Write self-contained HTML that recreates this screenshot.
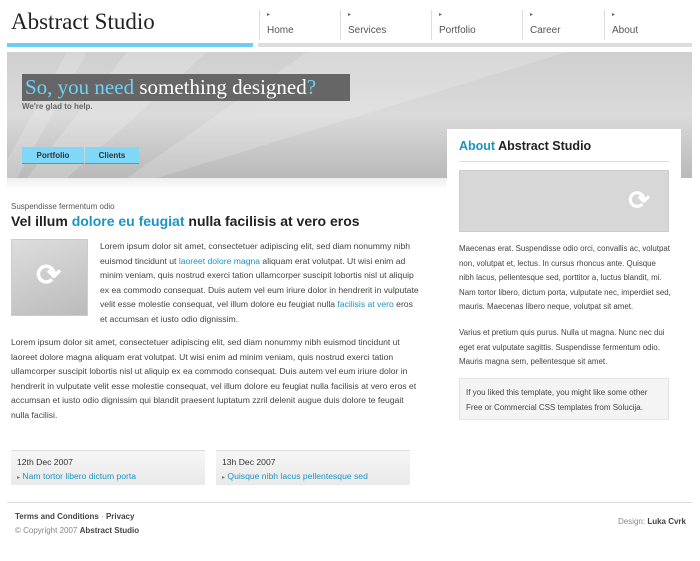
<!DOCTYPE html>
<html><head><meta charset="utf-8"><style>
*{margin:0;padding:0;box-sizing:border-box}
body{width:700px;height:561px;background:#fff;font-family:"Liberation Sans",sans-serif;color:#444;position:relative;overflow:hidden;font-size:11px}
.a{position:absolute}
a,.l{color:#1c94c4;text-decoration:none}
.logo{left:11px;top:9px;font-family:"Liberation Serif",serif;font-size:23px;color:#222}
.nav{top:10px;height:30px;border-left:1px solid #ddd;padding-left:7px;font-size:10px;color:#555}
.nav i{display:block;font-style:normal;font-size:6px;color:#666;line-height:8px;margin-top:1px}
.nav span{display:block;margin-top:6px}
.banner{left:7px;top:52px;width:685px;height:126px;background:linear-gradient(180deg,#cfcfcf,#dadada 50%,#b9b9b9);overflow:hidden}
.h1{left:22px;top:74px;width:328px;height:27px;background:#666;font-family:"Liberation Serif",serif;font-size:21px;color:#fff;padding-left:3px;line-height:27px}
.btn{top:147px;height:17px;background:#7fd8f8;border-bottom:1px solid #888;font-size:8px;font-weight:bold;color:#333;text-align:center;line-height:17px}
.side{left:447px;top:129px;width:234px;height:310px;background:#fff}
p{line-height:14.5px}
.sp{position:absolute;left:12px;width:212px;font-size:7.9px;line-height:14.5px;color:#444}
</style></head><body>
<div class="a logo">Abstract Studio</div>
<div class="a nav" style="left:259px;width:81px"><i>▸</i><span>Home</span></div>
<div class="a nav" style="left:340px;width:91px"><i>▸</i><span>Services</span></div>
<div class="a nav" style="left:431px;width:91px"><i>▸</i><span>Portfolio</span></div>
<div class="a nav" style="left:522px;width:82px"><i>▸</i><span>Career</span></div>
<div class="a nav" style="left:604px;width:88px"><i>▸</i><span>About</span></div>
<div class="a" style="left:7px;top:43px;width:246px;height:4px;background:#6dcdf2"></div>
<div class="a" style="left:258px;top:43px;width:434px;height:4px;background:#ddd"></div>
<div class="a banner">
<svg width="685" height="126" style="position:absolute;left:0;top:0"><g fill="#fff" opacity=".18"><polygon points="60,0 80,0 10,126 -10,126"/><polygon points="120,0 200,0 60,126 20,126"/><polygon points="300,0 560,0 150,126 120,126"/></g></svg>
</div>
<div class="a" style="left:7px;top:178px;width:440px;height:12px;background:linear-gradient(#eee,#fff)"></div>
<div class="a h1"><span style="color:#6fd0f5">So, you need</span> something designed<span style="color:#6fd0f5">?</span></div>
<div class="a" style="left:22px;top:102px;font-size:8px;font-weight:bold;color:#666">We're glad to help.</div>
<div class="a btn" style="left:22px;width:62px">Portfolio</div>
<div class="a btn" style="left:85px;width:54px">Clients</div>
<div class="a side">
<div class="a" style="left:12px;top:10px;font-size:12.5px;font-weight:bold;color:#222"><span class="l">About</span> Abstract Studio</div>
<div class="a" style="left:12px;top:32px;width:210px;height:1px;background:#ddd"></div>
<div class="a" style="left:12px;top:41px;width:210px;height:62px;background:#d7d7d7;border:1px solid #ccc"><div style="position:absolute;right:18px;top:14px;font-size:26px;color:#fff;font-weight:bold">⟳</div></div>
<div class="sp" style="top:113px">Maecenas erat. Suspendisse odio orci, convallis ac, volutpat non, volutpat et, lectus. In cursus rhoncus ante. Quisque nibh lacus, pellentesque sed, porttitor a, luctus blandit, mi. Nam tortor libero, dictum porta, vulputate nec, imperdiet sed, mauris. Maecenas libero neque, volutpat sit amet.</div>
<div class="sp" style="top:197px">Varius et pretium quis purus. Nulla ut magna. Nunc nec dui eget erat vulputate sagittis. Suspendisse fermentum odio. Mauris magna sem, pellentesque sit amet.</div>
<div class="a" style="left:12px;top:249px;width:210px;height:42px;background:#f4f4f4;border:1px solid #e4e4e4;padding:6px 6px;font-size:8px;line-height:15px">If you liked this template, you might like some other Free or Commercial CSS templates from Solucija.</div>
</div>
<div class="a" style="left:11px;top:202px;font-size:8px;color:#555">Suspendisse fermentum odio</div>
<div class="a" style="left:11px;top:213px;font-size:14px;font-weight:bold;color:#222">Vel illum <span class="l">dolore eu feugiat</span> nulla facilisis at vero eros</div>
<div class="a" style="left:11px;top:239px;width:77px;height:77px;background:linear-gradient(160deg,#ddd,#bbb);border:1px solid #ccc"><div style="position:absolute;left:24px;top:18px;font-size:30px;color:#fff;font-weight:bold">⟳</div></div>
<p class="a" style="left:100px;top:239px;width:322px;font-size:8.6px">Lorem ipsum dolor sit amet, consectetuer adipiscing elit, sed diam nonummy nibh euismod tincidunt ut <span class="l">laoreet dolore magna</span> aliquam erat volutpat. Ut wisi enim ad minim veniam, quis nostrud exerci tation ullamcorper suscipit lobortis nisl ut aliquip ex ea commodo consequat. Duis autem vel eum iriure dolor in hendrerit in vulputate velit esse molestie consequat, vel illum dolore eu feugiat nulla <span class="l">facilisis at vero</span> eros et accumsan et iusto odio dignissim.</p>
<p class="a" style="left:11px;top:335px;width:411px;font-size:8.6px">Lorem ipsum dolor sit amet, consectetuer adipiscing elit, sed diam nonummy nibh euismod tincidunt ut laoreet dolore magna aliquam erat volutpat. Ut wisi enim ad minim veniam, quis nostrud exerci tation ullamcorper suscipit lobortis nisl ut aliquip ex ea commodo consequat. Duis autem vel eum iriure dolor in hendrerit in vulputate velit esse molestie consequat, vel illum dolore eu feugiat nulla facilisis at vero eros et accumsan et iusto odio dignissim qui blandit praesent luptatum zzril delenit augue duis dolore te feugait nulla facilisi.</p>
<div class="a" style="left:11px;top:450px;width:194px;height:35px;background:linear-gradient(#f6f6f6,#e9e9e9);border-top:1px solid #ddd;padding:4px 6px;font-size:8.6px;line-height:14px;color:#333">12th Dec 2007<br><span style="font-size:6px;color:#777">▸</span> <span class="l">Nam tortor libero dictum porta</span></div>
<div class="a" style="left:216px;top:450px;width:194px;height:35px;background:linear-gradient(#f6f6f6,#e9e9e9);border-top:1px solid #ddd;padding:4px 6px;font-size:8.6px;line-height:14px;color:#333">13h Dec 2007<br><span style="font-size:6px;color:#777">▸</span> <span class="l">Quisque nibh lacus pellentesque sed</span></div>
<div class="a" style="left:7px;top:502px;width:685px;height:1px;background:#ddd"></div>
<div class="a" style="left:15px;top:512px;font-size:8px;font-weight:bold;color:#444">Terms and Conditions <span style="font-weight:normal;color:#888">·</span> Privacy</div>
<div class="a" style="left:15px;top:526px;font-size:8px;color:#888">© Copyright 2007 <b style="color:#444">Abstract Studio</b></div>
<div class="a" style="right:14px;top:517px;font-size:8px;color:#888">Design: <b style="color:#444">Luka Cvrk</b></div>
</body></html>
